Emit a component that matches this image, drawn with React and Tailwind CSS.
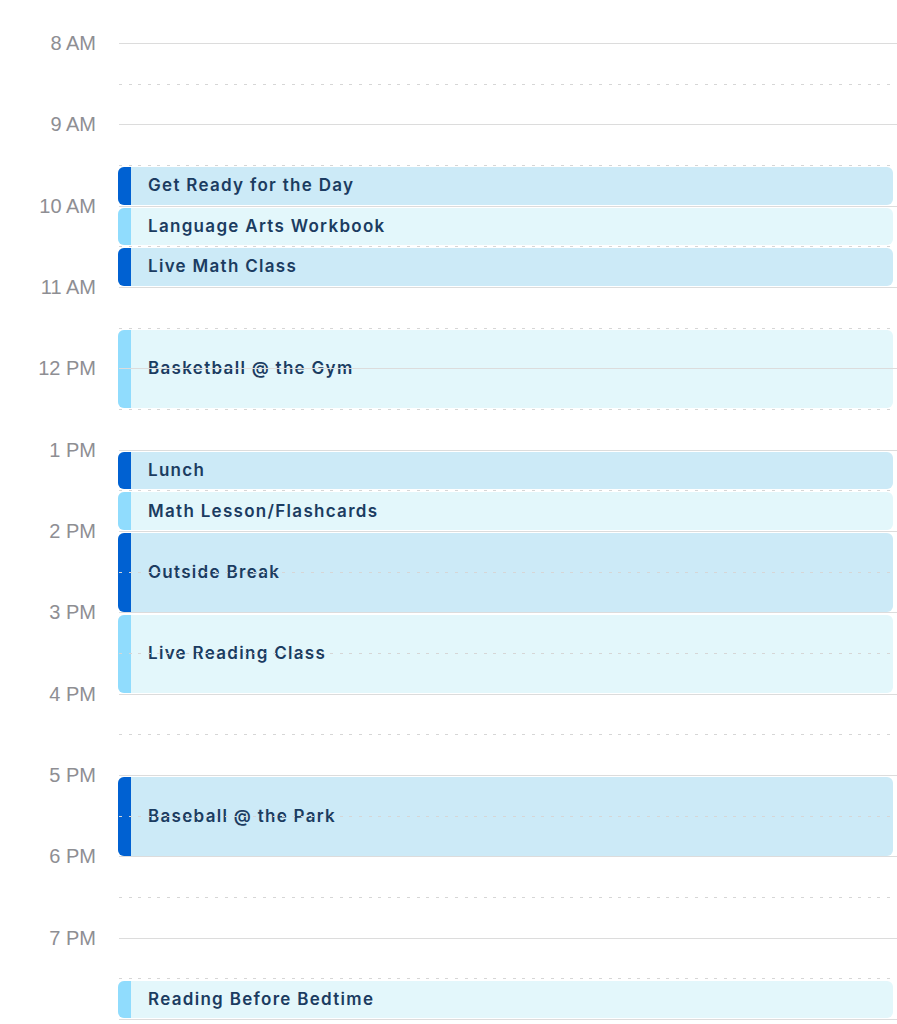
import React from "react";

const HOUR = 81.36;
const TOP = 43;

const hours = [
  "8 AM","9 AM","10 AM","11 AM","12 PM","1 PM","2 PM","3 PM","4 PM","5 PM","6 PM","7 PM",
];

const events = [
  { title: "Get Ready for the Day", start: 9.5, end: 10, dark: true },
  { title: "Language Arts Workbook", start: 10, end: 10.5, dark: false },
  { title: "Live Math Class", start: 10.5, end: 11, dark: true },
  { title: "Basketball @ the Gym", start: 11.5, end: 12.5, dark: false },
  { title: "Lunch", start: 13, end: 13.5, dark: true },
  { title: "Math Lesson/Flashcards", start: 13.5, end: 14, dark: false },
  { title: "Outside Break", start: 14, end: 15, dark: true },
  { title: "Live Reading Class", start: 15, end: 16, dark: false },
  { title: "Baseball @ the Park", start: 17, end: 18, dark: true },
  { title: "Reading Before Bedtime", start: 19.5, end: 20, dark: false },
];

function Event({ ev }) {
  const top = TOP + (ev.start - 8) * HOUR + 2;
  const height = (ev.end - ev.start) * HOUR - 3;
  return (
    <div
      className={`absolute left-[118px] right-[4px] z-0 flex overflow-hidden rounded-[6px] ${
        ev.dark ? "bg-[#cceaf7]" : "bg-[#e3f7fb]"
      }`}
      style={{ top, height }}
    >
      <div className={`w-[13px] shrink-0 ${ev.dark ? "bg-[#0061d2]" : "bg-[#90dcfd]"}`} />
      <div className="flex items-center pl-[17px] font-['Inter','Liberation_Sans',sans-serif] text-[17px] font-semibold tracking-[1.3px] text-[#1b3c61]">
        {ev.title}
      </div>
    </div>
  );
}

export default function App() {
  return (
    <div className="relative h-[1024px] w-[897px] overflow-hidden bg-white font-['Liberation_Sans','Inter',sans-serif]">
      <div className="pt-[43px]">
        {hours.map((h) => (
          <React.Fragment key={h}>
            <div className="relative z-10 flex h-[40.68px] items-start">
              <div className="-mt-[12px] w-[96px] shrink-0 text-right text-[20px] leading-[24px] text-[#8e8e93]">
                {h}
              </div>
              <div className="ml-[23px] h-px flex-1 bg-[#dcdcdc]" />
            </div>
            <div className="relative z-10 flex h-[40.68px] items-start">
              <div className="w-[119px] shrink-0" />
              <div className="h-px flex-1 bg-[repeating-linear-gradient(to_right,#d6d6d6_0_3px,transparent_3px_9.6px)]" />
            </div>
          </React.Fragment>
        ))}
        <div className="relative z-10 flex h-[40.68px] items-start">
          <div className="w-[119px] shrink-0" />
          <div className="h-px flex-1 bg-[#dcdcdc]" />
        </div>
      </div>
      {events.map((ev) => (
        <Event key={ev.title} ev={ev} />
      ))}
    </div>
  );
}
